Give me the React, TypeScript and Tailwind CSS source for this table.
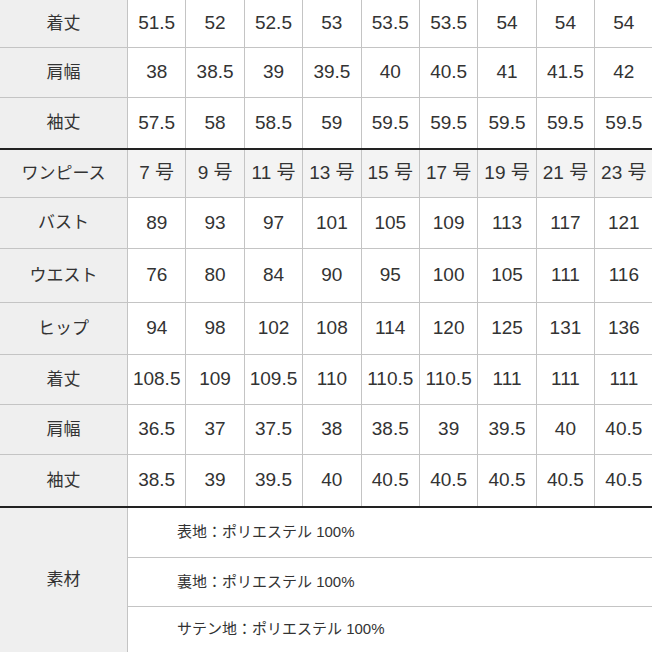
import React from 'react';

type Row = {
  label: string;
  values: string[];
  h: number;
  header?: boolean;
  last?: boolean;
};

const jacketRows: Row[] = [
  { label: '着丈', values: ['51.5', '52', '52.5', '53', '53.5', '53.5', '54', '54', '54'], h: 48 },
  { label: '肩幅', values: ['38', '38.5', '39', '39.5', '40', '40.5', '41', '41.5', '42'], h: 50 },
  { label: '袖丈', values: ['57.5', '58', '58.5', '59', '59.5', '59.5', '59.5', '59.5', '59.5'], h: 50, last: true },
];

const dressRows: Row[] = [
  { label: 'ワンピース', values: ['7 号', '9 号', '11 号', '13 号', '15 号', '17 号', '19 号', '21 号', '23 号'], h: 48, header: true },
  { label: 'バスト', values: ['89', '93', '97', '101', '105', '109', '113', '117', '121'], h: 51 },
  { label: 'ウエスト', values: ['76', '80', '84', '90', '95', '100', '105', '111', '116'], h: 54 },
  { label: 'ヒップ', values: ['94', '98', '102', '108', '114', '120', '125', '131', '136'], h: 52 },
  { label: '着丈', values: ['108.5', '109', '109.5', '110', '110.5', '110.5', '111', '111', '111'], h: 50 },
  { label: '肩幅', values: ['36.5', '37', '37.5', '38', '38.5', '39', '39.5', '40', '40.5'], h: 50 },
  { label: '袖丈', values: ['38.5', '39', '39.5', '40', '40.5', '40.5', '40.5', '40.5', '40.5'], h: 51, last: true },
];

const materials = [
  { text: '表地：ポリエステル 100%', h: 50 },
  { text: '裏地：ポリエステル 100%', h: 49 },
  { text: 'サテン地：ポリエステル 100%', h: 45 },
];

function SizeRow({ row }: { row: Row }) {
  return (
    <div
      className={`grid grid-cols-[128px_repeat(9,58.4px)] box-border ${row.last ? '' : 'border-b border-[#c4c4c4]'}`}
      style={{ height: row.h }}
    >
      <div className="flex items-center justify-center bg-[#efefef] border-r border-[#c4c4c4] text-[17px] text-[#333]">
        {row.label}
      </div>
      {row.values.map((v, i) => (
        <div
          key={i}
          className={`flex items-center justify-center border-r border-[#c4c4c4] text-[19px] text-[#333] ${row.header ? 'bg-[#f3f3f3]' : 'bg-white'}`}
        >
          {v}
        </div>
      ))}
    </div>
  );
}

function ThickLine() {
  return <div className="h-[2px] bg-[#222]" />;
}

export default function App() {
  return (
    <div
      className="w-[652px] h-[652px] overflow-hidden bg-white"
      style={{ fontFamily: '"Liberation Sans", "Noto Sans CJK JP", sans-serif' }}
    >
      {jacketRows.map((r, i) => (
        <SizeRow key={i} row={r} />
      ))}
      <ThickLine />
      {dressRows.map((r, i) => (
        <SizeRow key={i} row={r} />
      ))}
      <ThickLine />
      <div className="flex h-[144px]">
        <div className="w-[128px] shrink-0 flex items-center justify-center bg-[#efefef] border-r border-[#c4c4c4] text-[17px] text-[#333]">
          素材
        </div>
        <div className="flex-1 flex flex-col">
          {materials.map((m, i) => (
            <div
              key={i}
              className={`flex items-center pl-[49px] box-border text-[15px] text-[#333] ${i < materials.length - 1 ? 'border-b border-[#c4c4c4]' : ''}`}
              style={{ height: m.h }}
            >
              {m.text}
            </div>
          ))}
        </div>
      </div>
    </div>
  );
}
